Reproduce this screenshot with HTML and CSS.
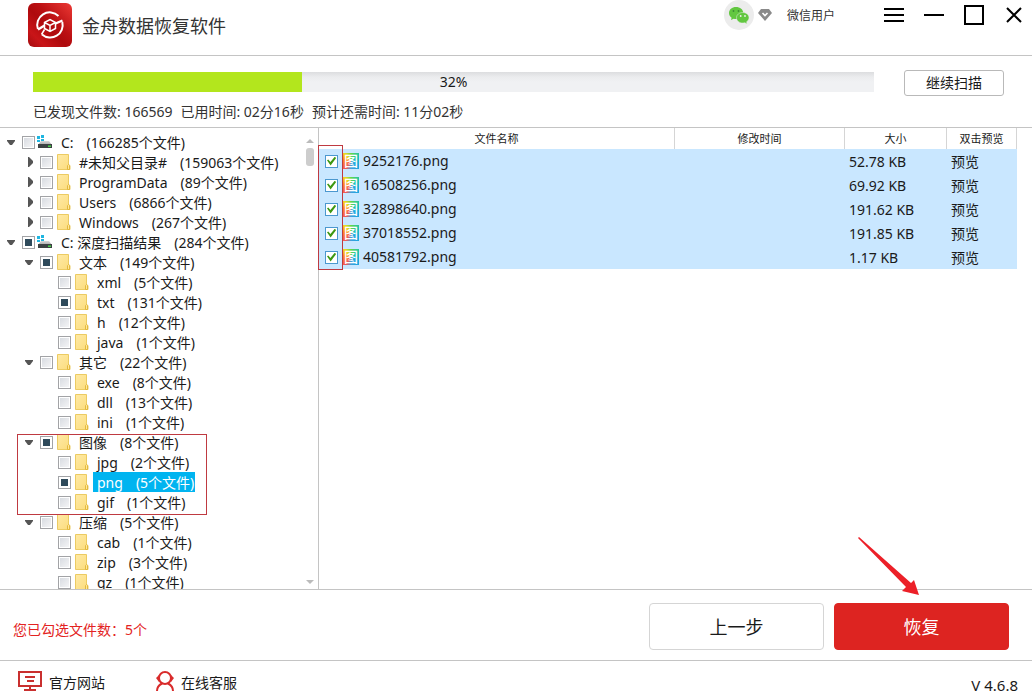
FILE: index.html
```html
<!DOCTYPE html>
<html lang="zh-CN">
<head>
<meta charset="utf-8">
<title>金舟数据恢复软件</title>
<link rel="stylesheet" href="styles.css">
</head>
<body>
<svg class="defs" aria-hidden="true">
  <defs>
    <linearGradient id="folder-fill" x1="0" y1="0" x2="1" y2="1"><stop offset="0" stop-color="#ffeaa6"/><stop offset="1" stop-color="#fbdc7b"/></linearGradient>
    <linearGradient id="drive-top" x1="0" y1="0" x2="0" y2="1"><stop offset="0" stop-color="#d9d9d9"/><stop offset="1" stop-color="#a5a5a5"/></linearGradient>
    <symbol id="folder" viewBox="0 0 14 16"><path d="M.5.5h11v10l1.500 1v4H.5z" fill="url(#folder-fill)" stroke="#eccb62"/><path d="M10.500 15.500v-4l1-1 1 1v4z" fill="#ffe79a" stroke="#e3b93f"/></symbol>
    <symbol id="drive" viewBox="0 0 16 14"><path d="M0 1h3v3H0zM4 0h3v3H4zM0 5h3v2H0zM4 4h3v3H4z" fill="#1fb5e0"/><path d="M4 6h8l3 4H1z" fill="url(#drive-top)"/><path d="M1 9h14v4H1z" fill="#3d4243"/><path d="M11 10.500h3v1.500h-3z" fill="#49d647"/></symbol>
    <symbol id="open" viewBox="0 0 10 6"><path d="M1 0h8v1L6 5H4L1 1z" fill="#555"/></symbol>
    <symbol id="closed" viewBox="0 0 6 10"><path d="M0 0h1l4 4v2l-4 4H0z" fill="#555"/></symbol>
  </defs>
</svg>

<header class="titlebar">
  <svg class="logo" viewBox="0 0 44 44" aria-hidden="true">
    <defs><linearGradient id="logo-fill" x1="0" y1="1" x2="1" y2="0"><stop offset="0" stop-color="#a30c0f"/><stop offset=".2" stop-color="#c91518"/><stop offset=".45" stop-color="#ae0a0d"/><stop offset=".6" stop-color="#bb1013"/><stop offset="1" stop-color="#ec3a35"/></linearGradient></defs>
    <rect width="44" height="44" rx="6" fill="url(#logo-fill)"/>
    <g fill="none" stroke="#fff" stroke-width="2">
      <path d="M9.900 26A12.500 12.500 0 0 1 30.500 13M34.300 19A12.500 12.500 0 0 1 14 31.500"/>
      <path d="M10 26.500l6.500-4M27.500 20.500l7-3" stroke-width="2.400"/>
      <path d="M16.500 19.500l5.500-3 5.500 3v6l-5.500 3-5.500-3zM16.500 19.500l5.500 3 5.500-3M22 22.500v6" stroke-width="1.500"/>
      <path d="M13.500 31.500l3-5" stroke-width="1.500"/>
    </g>
  </svg>
  <h1 class="title">金舟数据恢复软件</h1>
  <div class="account">
    <svg class="avatar" viewBox="0 0 30 30" aria-hidden="true">
      <circle cx="15" cy="15" r="15" fill="#ececec"/>
      <path d="M12 7c-4 0-7 2.600-7 6 0 2 1 3.600 2.600 4.700L7 20l2.700-1.300c.8.200 1.500.3 2.300.3 4 0 7.300-2.600 7.300-6S16 7 12 7z" fill="#62c740"/>
      <path d="M18.800 12.500c-3.600 0-6.300 2.300-6.300 5.200 0 3 2.700 5.300 6.300 5.300.7 0 1.400-.1 2-.3l2.400 1.300-.6-2.200c1.500-1 2.400-2.400 2.400-4.100 0-2.900-2.600-5.200-6.200-5.200z" fill="#62c740" stroke="#ececec" stroke-width=".5"/>
      <circle cx="9.500" cy="11" r=".9" fill="#3d8b35"/><circle cx="14.500" cy="11" r=".9" fill="#3d8b35"/><circle cx="16.700" cy="16" r=".9" fill="#eee"/><circle cx="21" cy="16" r=".9" fill="#eee"/>
    </svg>
    <svg class="gem" viewBox="0 0 14 12" aria-hidden="true"><path d="M3 0h8l3 4-7 8-7-8z" fill="#8a8a8a"/><path d="M4.500 4L7 6.500 9.500 4" fill="none" stroke="#fff" stroke-width="1.600"/></svg>
    <span class="user">微信用户</span>
  </div>
  <div class="window-controls">
    <button type="button" aria-label="菜单"><svg viewBox="0 0 20 20"><path d="M0 4h20M0 10h20M0 16h20"/></svg></button>
    <button type="button" aria-label="最小化"><svg viewBox="0 0 20 20"><path d="M0 10h20"/></svg></button>
    <button type="button" aria-label="最大化"><svg viewBox="0 0 20 20"><path d="M1 1h18v18H1z"/></svg></button>
    <button type="button" aria-label="关闭"><svg viewBox="0 0 20 20"><path d="M3 3l14 14M17 3L3 17"/></svg></button>
  </div>
</header>

<section class="scan">
  <div class="scan-row">
    <div class="progress" role="progressbar" aria-valuenow="32" aria-valuemin="0" aria-valuemax="100" aria-label="扫描进度">
      <div class="progress-fill" style="width:32%"></div>
      <span class="progress-text">32%</span>
    </div>
    <button type="button" class="scan-button">继续扫描</button>
  </div>
  <p class="stats"><span>已发现文件数: 166569</span><span>已用时间: 02分16秒</span><span>预计还需时间: 11分02秒</span></p>
</section>

<main class="content">
  <nav class="sidebar" aria-label="文件类型">
    <ul class="tree">
      <li><div class="row"><svg class="arrow"><use href="#open"/></svg><label><input type="checkbox"><svg class="icon drive"><use href="#drive"/></svg><span class="name"><span>C:</span><span>(166285个文件)</span></span></label></div>
        <ul>
          <li><div class="row"><svg class="arrow side"><use href="#closed"/></svg><label><input type="checkbox"><svg class="icon"><use href="#folder"/></svg><span class="name"><span>#未知父目录#</span><span>(159063个文件)</span></span></label></div></li>
          <li><div class="row"><svg class="arrow side"><use href="#closed"/></svg><label><input type="checkbox"><svg class="icon"><use href="#folder"/></svg><span class="name"><span>ProgramData</span><span>(89个文件)</span></span></label></div></li>
          <li><div class="row"><svg class="arrow side"><use href="#closed"/></svg><label><input type="checkbox"><svg class="icon"><use href="#folder"/></svg><span class="name"><span>Users</span><span>(6866个文件)</span></span></label></div></li>
          <li><div class="row"><svg class="arrow side"><use href="#closed"/></svg><label><input type="checkbox"><svg class="icon"><use href="#folder"/></svg><span class="name"><span>Windows</span><span>(267个文件)</span></span></label></div></li>
        </ul>
      </li>
      <li><div class="row"><svg class="arrow"><use href="#open"/></svg><label><input type="checkbox" class="partial"><svg class="icon drive"><use href="#drive"/></svg><span class="name"><span>C: 深度扫描结果</span><span>(284个文件)</span></span></label></div>
        <ul>
          <li><div class="row"><svg class="arrow"><use href="#open"/></svg><label><input type="checkbox" class="partial"><svg class="icon"><use href="#folder"/></svg><span class="name"><span>文本</span><span>(149个文件)</span></span></label></div>
            <ul>
              <li><div class="row leaf"><label><input type="checkbox"><svg class="icon"><use href="#folder"/></svg><span class="name"><span>xml</span><span>(5个文件)</span></span></label></div></li>
              <li><div class="row leaf"><label><input type="checkbox" class="partial"><svg class="icon"><use href="#folder"/></svg><span class="name"><span>txt</span><span>(131个文件)</span></span></label></div></li>
              <li><div class="row leaf"><label><input type="checkbox"><svg class="icon"><use href="#folder"/></svg><span class="name"><span>h</span><span>(12个文件)</span></span></label></div></li>
              <li><div class="row leaf"><label><input type="checkbox"><svg class="icon"><use href="#folder"/></svg><span class="name"><span>java</span><span>(1个文件)</span></span></label></div></li>
            </ul>
          </li>
          <li><div class="row"><svg class="arrow"><use href="#open"/></svg><label><input type="checkbox"><svg class="icon"><use href="#folder"/></svg><span class="name"><span>其它</span><span>(22个文件)</span></span></label></div>
            <ul>
              <li><div class="row leaf"><label><input type="checkbox"><svg class="icon"><use href="#folder"/></svg><span class="name"><span>exe</span><span>(8个文件)</span></span></label></div></li>
              <li><div class="row leaf"><label><input type="checkbox"><svg class="icon"><use href="#folder"/></svg><span class="name"><span>dll</span><span>(13个文件)</span></span></label></div></li>
              <li><div class="row leaf"><label><input type="checkbox"><svg class="icon"><use href="#folder"/></svg><span class="name"><span>ini</span><span>(1个文件)</span></span></label></div></li>
            </ul>
          </li>
          <li class="outlined"><div class="row"><svg class="arrow"><use href="#open"/></svg><label><input type="checkbox" class="partial"><svg class="icon"><use href="#folder"/></svg><span class="name"><span>图像</span><span>(8个文件)</span></span></label></div>
            <ul>
              <li><div class="row leaf"><label><input type="checkbox"><svg class="icon"><use href="#folder"/></svg><span class="name"><span>jpg</span><span>(2个文件)</span></span></label></div></li>
              <li><div class="row leaf"><label><input type="checkbox" class="partial"><svg class="icon"><use href="#folder"/></svg><span class="name selected"><span>png</span><span>(5个文件)</span></span></label></div></li>
              <li><div class="row leaf"><label><input type="checkbox"><svg class="icon"><use href="#folder"/></svg><span class="name"><span>gif</span><span>(1个文件)</span></span></label></div></li>
            </ul>
          </li>
          <li><div class="row"><svg class="arrow"><use href="#open"/></svg><label><input type="checkbox"><svg class="icon"><use href="#folder"/></svg><span class="name"><span>压缩</span><span>(5个文件)</span></span></label></div>
            <ul>
              <li><div class="row leaf"><label><input type="checkbox"><svg class="icon"><use href="#folder"/></svg><span class="name"><span>cab</span><span>(1个文件)</span></span></label></div></li>
              <li><div class="row leaf"><label><input type="checkbox"><svg class="icon"><use href="#folder"/></svg><span class="name"><span>zip</span><span>(3个文件)</span></span></label></div></li>
              <li><div class="row leaf"><label><input type="checkbox"><svg class="icon"><use href="#folder"/></svg><span class="name"><span>gz</span><span>(1个文件)</span></span></label></div></li>
            </ul>
          </li>
        </ul>
      </li>
    </ul>
    <div class="scrollbar" aria-hidden="true">
      <svg viewBox="0 0 8 4"><path d="M0 4l4-4 4 4z"/></svg>
      <div class="thumb"></div>
      <svg viewBox="0 0 8 4"><path d="M0 0h8L4 4z"/></svg>
    </div>
  </nav>

  <section class="files">
    <table>
      <colgroup><col><col class="col-date"><col class="col-size"><col class="col-preview"></colgroup>
      <thead><tr><th scope="col">文件名称</th><th scope="col">修改时间</th><th scope="col">大小</th><th scope="col">双击预览</th></tr></thead>
      <tbody>
        <tr><td><label class="file"><input type="checkbox" checked><span class="png-icon" aria-hidden="true">图</span><span>9252176.png</span></label></td><td></td><td>52.78 KB</td><td>预览</td></tr>
        <tr><td><label class="file"><input type="checkbox" checked><span class="png-icon" aria-hidden="true">图</span><span>16508256.png</span></label></td><td></td><td>69.92 KB</td><td>预览</td></tr>
        <tr><td><label class="file"><input type="checkbox" checked><span class="png-icon" aria-hidden="true">图</span><span>32898640.png</span></label></td><td></td><td>191.62 KB</td><td>预览</td></tr>
        <tr><td><label class="file"><input type="checkbox" checked><span class="png-icon" aria-hidden="true">图</span><span>37018552.png</span></label></td><td></td><td>191.85 KB</td><td>预览</td></tr>
        <tr><td><label class="file"><input type="checkbox" checked><span class="png-icon" aria-hidden="true">图</span><span>40581792.png</span></label></td><td></td><td>1.17 KB</td><td>预览</td></tr>
      </tbody>
    </table>
    <div class="check-outline"></div>
  </section>
</main>

<section class="actions">
  <p class="selected-count">您已勾选文件数：5个</p>
  <button type="button" class="action">上一步</button>
  <button type="button" class="action primary">恢复</button>
  <svg class="pointer" viewBox="0 0 62 60" aria-hidden="true"><path d="M1 0L53 46l3-3 5 15-17-4 4-4L0 1z" fill="#ec2028"/></svg>
</section>

<footer class="footer">
  <a href="#site"><svg class="site-icon" viewBox="0 0 24 20" aria-hidden="true"><path d="M1 1h22v14H1zM12 15v4M6 19h12M7 6h10M9 10h7" fill="none" stroke="#c9302f" stroke-width="2"/></svg><span>官方网站</span></a>
  <a href="#service"><svg class="service-icon" viewBox="0 0 18 20" aria-hidden="true"><circle cx="9" cy="7" r="6" fill="none" stroke="#d92b2b" stroke-width="2"/><path d="M3 4L0 7l3 4zM15 4l3 3-3 4z" fill="#d92b2b"/><path d="M1 20c0-4 2-6 5-7.500M17 20c0-4-2-6-5-7.500" fill="none" stroke="#d92b2b" stroke-width="2"/></svg><span>在线客服</span></a>
  <span class="version">V 4.6.8</span>
</footer>
</body>
</html>
```

FILE: styles.css
```css
*, ::before, ::after { box-sizing: border-box; }

body {
  margin: 0;
  height: 100vh;
  display: flex;
  flex-direction: column;
  background: #fff;
  color: #1a1a1a;
  font: 14px/20px "Noto Sans", "Noto Sans CJK SC", sans-serif;
}

h1, p, ul { margin: 0; padding: 0; font-weight: inherit; }
ul { list-style: none; }
button { font: inherit; color: inherit; cursor: pointer; }
svg { display: block; flex: none; }
.defs { position: absolute; width: 0; height: 0; }

/* Title bar */
.titlebar {
  display: flex;
  align-items: flex-start;
  height: 56px;
  flex: none;
  padding-left: 28px;
  border-bottom: 1px solid #c4c4c4;
}
.logo { width: 44px; height: 44px; margin-top: 3px; }
.title { font-size: 18px; line-height: 24px; margin: 14px auto 0 10px; color: #333; }
.account { display: flex; align-items: center; height: 30px; }
.avatar { width: 30px; height: 30px; }
.gem { width: 14px; height: 12px; margin: 0 15px 0 4px; }
.user { padding-top: 2px; font-size: 12px; color: #333; }
.window-controls { display: flex; gap: 20px; margin: 5px 8px 0 49px; }
.window-controls button { padding: 0; border: 0; background: none; }
.window-controls svg { width: 20px; height: 20px; fill: none; stroke: #000; stroke-width: 2; }

/* Scan progress */
.scan { flex: none; height: 72px; padding: 14px 28px 0 33px; border-bottom: 1px solid #c4c4c4; }
.scan-row { display: flex; align-items: flex-start; gap: 30px; }
.progress {
  position: relative;
  flex: 1;
  height: 20px;
  margin-top: 2px;
  background: linear-gradient(#dcdddf, #ebecee 5px, #f0f1f3 10px);
}
.progress-fill { height: 100%; background: #b3e61d; }
.progress-text { position: absolute; inset: 0; text-align: center; }
.scan-button { width: 100px; height: 26px; padding: 0; border: 1px solid #b9b9b9; border-radius: 3px; background: #fff; }
.stats { display: flex; gap: 8px; margin-top: 6px; color: #333; }

/* Tree */
.content { flex: 1; min-height: 0; display: flex; }
.sidebar { display: flex; flex: none; width: 319px; border-right: 1px solid #c4c4c4; overflow: hidden; }
.tree { flex: 1; padding: 4px 0 0 6px; }
.tree ul { padding-left: 18px; }
.row { display: flex; align-items: center; height: 20px; }
.row label { display: flex; align-items: center; white-space: nowrap; }
.leaf { padding-left: 16px; }
.arrow { width: 10px; height: 6px; margin: 2px 6px 0 0; }
.arrow.side { width: 6px; height: 10px; margin: 0 6px 0 4px; }
.row input {
  appearance: none;
  flex: none;
  width: 13px;
  height: 13px;
  margin: 0 4px 0 0;
  border: 1px solid #a2a3a6;
  background: linear-gradient(135deg, #d5d9df, #f7f7f8);
  box-shadow: inset 0 0 0 1px #fff;
}
.row .partial { background: #2e4a5b; box-shadow: inset 0 0 0 2px #fff; }
.icon { width: 14px; height: 16px; }
.icon.drive { width: 16px; height: 14px; margin-left: -2px; }
.name { display: flex; gap: 13px; height: 20px; padding-left: 4px; margin-left: 4px; line-height: 22px; }
.selected { padding-right: 1px; background: #00b4f0; color: #fff; }

.outlined { position: relative; }
.outlined::after {
  content: "";
  position: absolute;
  left: -7px;
  top: 2px;
  width: 190px;
  height: 81px;
  border: 1px solid #bf3a41;
  pointer-events: none;
}

.scrollbar { display: flex; flex-direction: column; align-items: center; width: 16px; padding: 11px 0 5px; }
.scrollbar svg { width: 8px; height: 4px; fill: #bbb; }
.thumb { width: 8px; height: 18px; margin: 5px 0 auto; border-radius: 3px; background: #cdcdcd; }

/* File table */
.files { position: relative; flex: 1; padding-right: 15px; }
table { width: 100%; table-layout: fixed; border-collapse: separate; border-spacing: 0; }
.col-date { width: 170px; }
.col-size { width: 102px; }
.col-preview { width: 70px; }
th { height: 21px; padding: 1px 0 0; border-right: 1px solid #d5d5d5; font-size: 11px; font-weight: 400; }
td { height: 24px; padding: 2px 4px 0; background: #c9e7ff; white-space: nowrap; }
td:first-child { padding: 0 6px; }
.file { display: flex; align-items: center; line-height: 22px; }
.file input {
  appearance: none;
  flex: none;
  width: 13px;
  height: 13px;
  margin: 0 5px 0 0;
  border: 1px solid #4b98cf;
  background: #fff;
  display: grid;
  place-items: center;
}
.file input:checked::before {
  content: "";
  width: 9px;
  height: 9px;
  background: #3e9812;
  clip-path: polygon(0 42%, 14% 34%, 38% 60%, 88% 0, 100% 20%, 40% 100%);
}
.png-icon {
  width: 16px;
  height: 16px;
  margin-right: 4px;
  background: conic-gradient(#65d646, #17c3b5 60deg, #18a8e0 120deg, #3f9fdc 180deg, #f25757 215deg, #ff8b20 280deg, #f0d820 320deg, #65d646);
  color: #fff;
  font-size: 14px;
  font-weight: 500;
  line-height: 16px;
  text-align: center;
}
.check-outline {
  position: absolute;
  left: -1px;
  top: 17px;
  width: 25px;
  height: 125px;
  border: 1px solid #bf3a41;
  pointer-events: none;
}

/* Actions */
.actions {
  position: relative;
  flex: none;
  display: flex;
  align-items: flex-start;
  gap: 10px;
  height: 72px;
  padding: 13px 23px 0 13px;
  border: solid #c4c4c4;
  border-width: 1px 0;
}
.selected-count { margin: 17px auto 0 0; color: #e32322; }
.action { width: 175px; height: 47px; padding: 0; border: 1px solid #d5d5d5; border-radius: 4px; background: #fff; font-size: 18px; }
.action.primary { border-color: #dd2421; background: #dd2421; color: #fff; }
.pointer { position: absolute; right: 112px; top: -53px; width: 62px; height: 60px; }

/* Footer */
.footer { flex: none; display: flex; align-items: flex-start; gap: 51px; height: 36px; padding: 10px 14px 0 18px; }
.footer a { display: flex; align-items: flex-start; gap: 7px; color: inherit; text-decoration: none; }
.footer span { padding-top: 2px; }
.site-icon { width: 24px; height: 20px; }
.service-icon { width: 18px; height: 20px; }
.footer .version { margin-left: auto; padding-top: 4px; font-size: 15px; }
```
